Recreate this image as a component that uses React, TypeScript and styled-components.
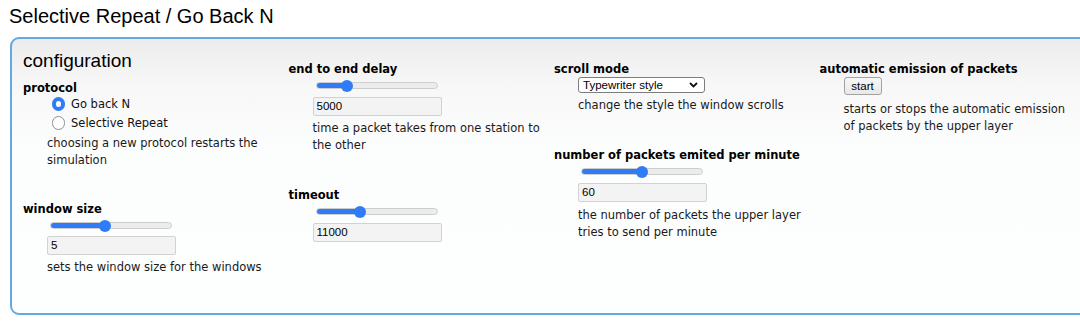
import React from "react";
import styled, { createGlobalStyle } from "styled-components";

const GlobalStyle = createGlobalStyle`
  html, body {
    margin: 0;
    padding: 0;
    background: #fff;
    overflow: hidden;
  }
  body {
    font-family: "DejaVu Sans", Verdana, sans-serif;
    color: #111;
  }
`;

const BLUE = "#2f7cf6";

// thumb 12px on a 122px track -> centre of the thumb as % of the track
const fillPercent = (value: number, min: number, max: number) => {
  const p = (value - min) / (max - min);
  return ((6 + p * 110) / 122) * 100;
};

const Slider: React.FC<{ value: number; min: number; max: number }> = ({ value, min, max }) => (
  <Range
    type="range"
    min={min}
    max={max}
    defaultValue={value}
    style={{ ["--fill" as string]: `${fillPercent(value, min, max)}%` } as React.CSSProperties}
  />
);

const Setting: React.FC<{ label: string; first?: boolean; gap?: number; children: React.ReactNode }> = ({
  label,
  first,
  gap,
  children,
}) => (
  <Section $first={first} $gap={gap}>
    <Label>{label}</Label>
    <Body>{children}</Body>
  </Section>
);

const App: React.FC = () => {
  return (
    <>
      <GlobalStyle />
      <Title>Selective Repeat / Go Back N</Title>
      <Panel>
        <Column>
          <Heading>configuration</Heading>
          <Setting label="protocol" first>
            <RadioRow>
              <Radio type="radio" name="protocol" defaultChecked />
              Go back N
            </RadioRow>
            <RadioRow>
              <Radio type="radio" name="protocol" />
              Selective Repeat
            </RadioRow>
            <Desc $gap={2.5}>choosing a new protocol restarts the simulation</Desc>
          </Setting>
          <Setting label="window size" gap={33}>
            <Slider value={5} min={1} max={10} />
            <TextInput defaultValue="5" $top={4} />
            <Desc>sets the window size for the windows</Desc>
          </Setting>
        </Column>

        <Column $offset>
          <Setting label="end to end delay" first>
            <Slider value={5000} min={500} max={20000} />
            <TextInput defaultValue="5000" />
            <Desc>time a packet takes from one station to the other</Desc>
          </Setting>
          <Setting label="timeout" gap={34}>
            <Slider value={11000} min={1000} max={30000} />
            <TextInput defaultValue="11000" />
          </Setting>
        </Column>

        <Column $offset>
          <Setting label="scroll mode" first>
            <SelectWrap>
              <Select defaultValue="typewriter">
                <option value="typewriter">Typewriter style</option>
                <option value="smooth">Smooth</option>
              </Select>
              <Chevron width="9" height="6" viewBox="0 0 9 6">
                <polyline points="1,1 4.5,4.5 8,1" fill="none" stroke="#111" strokeWidth="1.8" />
              </Chevron>
            </SelectWrap>
            <Desc $gap={4}>change the style the window scrolls</Desc>
          </Setting>
          <Setting label="number of packets emited per minute" gap={34}>
            <Slider value={60} min={0} max={120} />
            <TextInput defaultValue="60" />
            <Desc $gap={5.5}>the number of packets the upper layer tries to send per minute</Desc>
          </Setting>
        </Column>

        <Column $offset>
          <Setting label="automatic emission of packets" first>
            <Button type="button">start</Button>
            <Desc $gap={6}>starts or stops the automatic emission of packets by the upper layer</Desc>
          </Setting>
        </Column>
      </Panel>
    </>
  );
};

const Title = styled.h1`
  margin: 4px 0 0 9px;
  font-family: "Liberation Sans", Arial, sans-serif;
  font-size: 20px;
  font-weight: 400;
  line-height: 24px;
  color: #000;
`;

const Panel = styled.div`
  box-sizing: border-box;
  width: 1092px;
  margin: 9px 0 0 10px;
  padding: 11px 0 37px 11px;
  border: 2px solid #64aae2;
  border-radius: 9px;
  background: linear-gradient(to bottom, #ececec 0px, #f7f7f7 45px, #fcfdfd 110px, #fdfefe 100%);
  display: grid;
  grid-template-columns: repeat(4, 265.5px);
  align-items: start;
`;

const Column = styled.div<{ $offset?: boolean }>`
  display: flex;
  flex-direction: column;
  padding-top: ${(p) => (p.$offset ? "12px" : "0")};
`;

const Heading = styled.h3`
  margin: 0;
  font-family: "Liberation Sans", Arial, sans-serif;
  font-size: 19px;
  font-weight: 400;
  line-height: 22px;
  color: #000;
`;

const Section = styled.div<{ $first?: boolean; $gap?: number }>`
  margin-top: ${(p) => (p.$first ? 8.5 : p.$gap ?? 33)}px;
  &:first-child {
    margin-top: 0;
  }
`;

const Label = styled.div`
  font-size: 11.5px;
  font-weight: 700;
  line-height: 14px;
  color: #000;
  white-space: nowrap;
`;

const Body = styled.div`
  padding-left: 24px;
  display: flex;
  flex-direction: column;
  align-items: flex-start;
`;

const RadioRow = styled.label`
  display: flex;
  align-items: center;
  height: 19px;
  font-size: 11.5px;
  color: #111;
`;

const Radio = styled.input`
  appearance: none;
  box-sizing: border-box;
  width: 13.5px;
  height: 13.5px;
  margin: 0 6px 0 4.5px;
  border-radius: 50%;
  border: 1px solid #8f8f8f;
  background: #fff;
  &:checked {
    border: 4px solid ${BLUE};
  }
`;

const Desc = styled.div<{ $gap?: number }>`
  margin-top: ${(p) => p.$gap ?? 4.5}px;
  max-width: 236px;
  font-size: 11.5px;
  line-height: 17px;
  color: #1a1a1a;
`;

const Range = styled.input`
  appearance: none;
  -webkit-appearance: none;
  width: 122px;
  height: 12px;
  margin: 3.5px 0 0 3px;
  padding: 0;
  background: transparent;

  &::-webkit-slider-runnable-track {
    box-sizing: border-box;
    height: 7px;
    border-radius: 4px;
    border: 1px solid #cdcdcd;
    background: linear-gradient(
      to right,
      ${BLUE} 0,
      ${BLUE} var(--fill),
      #ececec var(--fill),
      #ececec 100%
    );
  }
  &::-webkit-slider-thumb {
    -webkit-appearance: none;
    width: 12px;
    height: 12px;
    margin-top: -3.5px;
    border-radius: 50%;
    background: ${BLUE};
    border: none;
  }
`;

const TextInput = styled.input<{ $top?: number }>`
  box-sizing: border-box;
  width: 129px;
  height: 19px;
  margin-top: ${(p) => p.$top ?? 5}px;
  padding: 0 3px;
  border: 1px solid #d2d2d2;
  border-radius: 2px;
  background: #f3f3f3;
  font-family: "Liberation Sans", Arial, sans-serif;
  font-size: 11.5px;
  color: #000;
  outline: none;
`;

const SelectWrap = styled.div`
  position: relative;
  display: flex;
  margin-top: 1px;
`;

const Select = styled.select`
  appearance: none;
  box-sizing: border-box;
  display: block;
  width: 127px;
  height: 16px;
  margin: 0;
  padding: 0 0 0 4px;
  border: 1px solid #7d7d7d;
  border-radius: 3px;
  background: #fff;
  font-family: "Liberation Sans", Arial, sans-serif;
  font-size: 11.5px;
  line-height: 14px;
  color: #000;
`;

const Chevron = styled.svg`
  position: absolute;
  right: 7px;
  top: 5px;
  pointer-events: none;
`;

const Button = styled.button`
  box-sizing: border-box;
  width: 38px;
  height: 18px;
  margin-top: 1px;
  padding: 0;
  border: 1px solid #a3a3a3;
  border-radius: 3px;
  background: linear-gradient(to bottom, #f7f7f7, #e8e8e8);
  font-family: "Liberation Sans", Arial, sans-serif;
  font-size: 11.5px;
  color: #000;
`;

export default App;
